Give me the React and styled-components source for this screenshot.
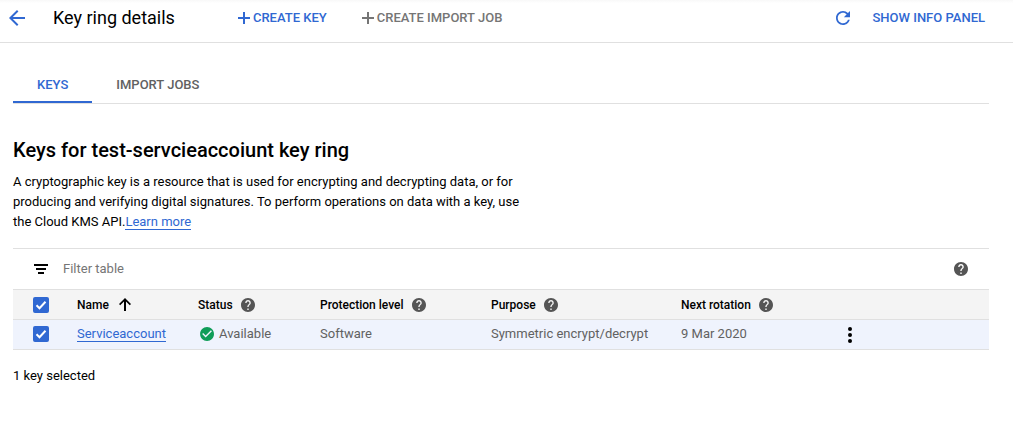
import React, { useState } from "react";
import styled, { createGlobalStyle } from "styled-components";

const blue = "#3068d2";
const line = "#e0e0e0";

const GlobalStyle = createGlobalStyle`
  *, *::before, *::after { box-sizing: border-box; }
  body {
    margin: 0;
    background: #fff;
    color: #000;
    font: 400 13px/20px Roboto, "Liberation Sans", sans-serif;
  }
  button, input { font: inherit; color: inherit; }
`;

const Glyph = styled.svg`
  display: block;
  flex: none;
  fill: currentColor;
`;

const HelpIcon = () => (
  <Glyph width="14" height="14" viewBox="2 2 20 20" aria-hidden="true">
    <path d="M12 2C6.48 2 2 6.48 2 12s4.48 10 10 10 10-4.48 10-10S17.52 2 12 2zm1 17h-2v-2h2v2zm2.07-7.75l-.9.92C13.45 12.9 13 13.5 13 15h-2v-.5c0-1.1.45-2.1 1.17-2.83l1.24-1.26c.37-.36.59-.86.59-1.41 0-1.1-.9-2-2-2s-2 .9-2 2H8c0-2.21 1.79-4 4-4s4 1.79 4 4c0 .88-.36 1.68-.93 2.25z" />
  </Glyph>
);

const PlusIcon = () => (
  <Glyph width="12" height="12" viewBox="0 0 12 12" aria-hidden="true">
    <path d="M5 0h2v5h5v2H7v5H5V7H0V5h5z" />
  </Glyph>
);

const PlainButton = styled.button`
  display: flex;
  align-items: center;
  padding: 0;
  border: 0;
  background: none;
  cursor: pointer;
`;

const Header = styled.header`
  display: flex;
  align-items: center;
  height: 43px;
  padding: 0 28px 7px 9px;
  border-bottom: 1px solid ${line};
  background: linear-gradient(#f8f8f8, #fff 3px);
`;

const BackButton = styled(PlainButton)`
  color: ${blue};
`;

const PageTitle = styled.h1`
  margin: 0 63px 0 28px;
  font-size: 18px;
  font-weight: 400;
  line-height: 24px;
`;

const ActionButton = styled(PlainButton)`
  gap: 3px;
  font-weight: 500;
  white-space: nowrap;
  color: ${({ $muted }) => ($muted ? "#757575" : blue)};
`;

const Actions = styled.div`
  display: flex;
  gap: 35px;
`;

const PanelActions = styled.div`
  display: flex;
  align-items: center;
  gap: 22px;
  margin-left: auto;
`;

const Main = styled.main`
  padding: 24px 24px 24px 13px;
`;

const TabBar = styled.div`
  display: flex;
  border-bottom: 1px solid ${line};
`;

const Tab = styled(PlainButton)`
  height: 36px;
  padding: 2px 24px 0;
  border-bottom: 2px solid ${({ $active }) => ($active ? blue : "transparent")};
  font-weight: 500;
  color: ${({ $active }) => ($active ? blue : "#616161")};
`;

const SectionTitle = styled.h2`
  margin: 33px 0 9px;
  font-size: 20px;
  font-weight: 500;
  line-height: 26px;
`;

const Description = styled.p`
  max-width: 512px;
  margin: 0 0 16px;
`;

const Link = styled.a`
  border-bottom: 1px solid ${blue};
  color: ${blue};
  text-decoration: none;
`;

const FilterBar = styled.div`
  display: flex;
  align-items: center;
  gap: 15px;
  height: 41px;
  padding: 0 21px;
  border-top: 1px solid ${line};
`;

const FilterInput = styled.input`
  flex: 1;
  min-width: 0;
  padding: 0;
  border: 0;
  outline: 0;
  background: none;
  &::placeholder { color: #757575; opacity: 1; }
`;

const HelpButton = styled(PlainButton)`
  color: #555;
`;

const KeyTable = styled.table`
  width: 100%;
  table-layout: fixed;
  border-collapse: separate;
  border-spacing: 0;
`;

const Column = styled.col`
  width: ${({ $width }) => $width}px;
`;

const HeadCell = styled.th`
  height: 31px;
  padding: 0;
  border: solid ${line};
  border-width: 1px 0;
  background: #f4f4f4;
  font-size: 12px;
  font-weight: 500;
  text-align: left;
  white-space: nowrap;
`;

const Cell = styled.td`
  height: 30px;
  padding: 0 0 2px;
  border-bottom: 1px solid ${line};
  background: #eff3fd;
  color: #616161;
  white-space: nowrap;
`;

const MenuCell = styled(Cell)`
  padding: 0;
`;

const Inline = styled.div`
  display: flex;
  align-items: center;
  gap: ${({ $gap }) => $gap}px;
`;

const CheckLabel = styled.label`
  position: relative;
  display: block;
  width: 16px;
  height: 16px;
  margin-left: 20px;
`;

const CheckInput = styled.input`
  appearance: none;
  display: block;
  width: 16px;
  height: 16px;
  margin: 0;
  border: 2px solid #757575;
  border-radius: 2px;
  &:checked { border-color: ${blue}; background: ${blue}; }
`;

const CheckMark = styled(Glyph)`
  position: absolute;
  inset: 0;
  fill: none;
  stroke: #fff;
  stroke-width: 2;
  pointer-events: none;
`;

const StatusIcon = styled(Glyph)`
  color: #0f9d58;
`;

const MenuButton = styled(PlainButton)`
  color: #000;
`;

const Summary = styled.p`
  margin: 16px 0 0;
`;

function Checkbox({ label }) {
  const [checked, setChecked] = useState(true);
  return (
    <CheckLabel>
      <CheckInput
        type="checkbox"
        aria-label={label}
        checked={checked}
        onChange={(e) => setChecked(e.target.checked)}
      />
      {checked && (
        <CheckMark width="16" height="16" viewBox="0 0 16 16" aria-hidden="true">
          <path d="M3.5 8.2l3 3 6-6.4" />
        </CheckMark>
      )}
    </CheckLabel>
  );
}

function HeadLabel({ children }) {
  return (
    <Inline $gap={8}>
      {children}
      <HelpButton type="button" aria-label={`Help: ${children}`}>
        <HelpIcon />
      </HelpButton>
    </Inline>
  );
}

export default function App() {
  return (
    <>
      <GlobalStyle />
      <Header>
        <BackButton type="button" aria-label="Back">
          <Glyph width="16" height="16" viewBox="4 4 16 16" aria-hidden="true">
            <path d="M20 11H7.83l5.59-5.59L12 4l-8 8 8 8 1.41-1.41L7.83 13H20v-2z" />
          </Glyph>
        </BackButton>
        <PageTitle>Key ring details</PageTitle>
        <Actions>
          <ActionButton type="button"><PlusIcon />CREATE KEY</ActionButton>
          <ActionButton type="button" $muted><PlusIcon />CREATE IMPORT JOB</ActionButton>
        </Actions>
        <PanelActions>
          <ActionButton type="button" aria-label="Refresh">
            <Glyph width="14" height="14" viewBox="4 4 16 16" aria-hidden="true">
              <path d="M17.65 6.35C16.2 4.9 14.21 4 12 4c-4.42 0-7.99 3.58-7.99 8s3.57 8 7.99 8c3.73 0 6.84-2.55 7.73-6h-2.08c-.82 2.33-3.04 4-5.65 4-3.31 0-6-2.69-6-6s2.69-6 6-6c1.66 0 3.14.69 4.22 1.78L13 11h7V4l-2.35 2.35z" />
            </Glyph>
          </ActionButton>
          <ActionButton type="button">SHOW INFO PANEL</ActionButton>
        </PanelActions>
      </Header>
      <Main>
        <TabBar role="tablist">
          <Tab type="button" role="tab" aria-selected="true" $active>KEYS</Tab>
          <Tab type="button" role="tab" aria-selected="false">IMPORT JOBS</Tab>
        </TabBar>
        <SectionTitle>Keys for test-servcieaccoiunt key ring</SectionTitle>
        <Description>
          A cryptographic key is a resource that is used for encrypting and decrypting data, or for
          producing and verifying digital signatures. To perform operations on data with a key, use
          the Cloud KMS API.<Link href="#learn-more">Learn more</Link>
        </Description>
        <FilterBar>
          <Glyph width="14" height="10" viewBox="0 0 14 10" aria-hidden="true">
            <path d="M0 0h14v2H0zM2 4h10v2H2zM4 8h6v2H4z" />
          </Glyph>
          <FilterInput type="text" placeholder="Filter table" aria-label="Filter table" />
          <HelpButton type="button" aria-label="Help: filtering"><HelpIcon /></HelpButton>
        </FilterBar>
        <KeyTable>
          <colgroup>
            <Column $width={64} />
            <Column $width={121} />
            <Column $width={122} />
            <Column $width={171} />
            <Column $width={190} />
            <Column $width={167} />
            <col />
          </colgroup>
          <thead>
            <tr>
              <HeadCell><Checkbox label="Select all keys" /></HeadCell>
              <HeadCell>
                <Inline $gap={10}>
                  Name
                  <Glyph width="12" height="13" viewBox="0 0 12 13" aria-hidden="true">
                    <path d="M0 6l1.2 1.2L5 3.4V13h2V3.4l3.8 3.8L12 6 6 0z" />
                  </Glyph>
                </Inline>
              </HeadCell>
              <HeadCell><HeadLabel>Status</HeadLabel></HeadCell>
              <HeadCell><HeadLabel>Protection level</HeadLabel></HeadCell>
              <HeadCell><HeadLabel>Purpose</HeadLabel></HeadCell>
              <HeadCell><HeadLabel>Next rotation</HeadLabel></HeadCell>
              <HeadCell />
            </tr>
          </thead>
          <tbody>
            <tr>
              <Cell><Checkbox label="Select Serviceaccount" /></Cell>
              <Cell><Link href="#serviceaccount">Serviceaccount</Link></Cell>
              <Cell>
                <Inline $gap={5}>
                  <StatusIcon width="16" height="14" viewBox="-1 2 23 20" aria-hidden="true">
                    <path d="M12 2C6.48 2 2 6.48 2 12s4.48 10 10 10 10-4.48 10-10S17.52 2 12 2zm-2 15l-5-5 1.41-1.41L10 14.17l7.59-7.59L19 8l-9 9z" />
                  </StatusIcon>
                  Available
                </Inline>
              </Cell>
              <Cell>Software</Cell>
              <Cell>Symmetric encrypt/decrypt</Cell>
              <Cell>9 Mar 2020</Cell>
              <MenuCell>
                <MenuButton type="button" aria-label="More actions">
                  <Glyph width="4" height="16" viewBox="0 0 4 16" aria-hidden="true">
                    <circle cx="2" cy="2" r="2" />
                    <circle cx="2" cy="8" r="2" />
                    <circle cx="2" cy="14" r="2" />
                  </Glyph>
                </MenuButton>
              </MenuCell>
            </tr>
          </tbody>
        </KeyTable>
        <Summary>1 key selected</Summary>
      </Main>
    </>
  );
}
